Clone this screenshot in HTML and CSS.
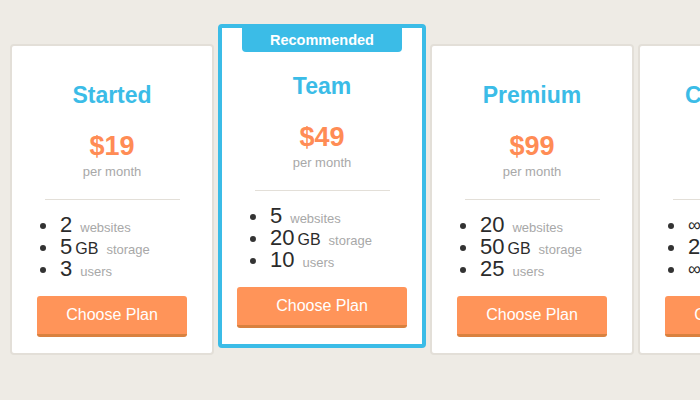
FILE: index.html
```html
<!DOCTYPE html>
<html lang="en">
<head>
<meta charset="utf-8">
<title>Pricing plans</title>
<link rel="stylesheet" href="styles.css">
</head>
<body>
<div class="plans">
  <div class="plan">
    <h2 class="plan-name">Started</h2>
    <div class="plan-price">$19</div>
    <div class="plan-period">per month</div>
    <hr class="plan-divider">
    <ul class="plan-features">
      <li><span class="qty">2</span><span class="label">websites</span></li>
      <li><span class="qty">5</span><span class="unit">GB</span><span class="label">storage</span></li>
      <li><span class="qty">3</span><span class="label">users</span></li>
    </ul>
    <a class="plan-button" href="#">Choose Plan</a>
  </div>
  <div class="plan plan-featured">
    <div class="plan-badge">Recommended</div>
    <h2 class="plan-name">Team</h2>
    <div class="plan-price">$49</div>
    <div class="plan-period">per month</div>
    <hr class="plan-divider">
    <ul class="plan-features">
      <li><span class="qty">5</span><span class="label">websites</span></li>
      <li><span class="qty">20</span><span class="unit">GB</span><span class="label">storage</span></li>
      <li><span class="qty">10</span><span class="label">users</span></li>
    </ul>
    <a class="plan-button" href="#">Choose Plan</a>
  </div>
  <div class="plan">
    <h2 class="plan-name">Premium</h2>
    <div class="plan-price">$99</div>
    <div class="plan-period">per month</div>
    <hr class="plan-divider">
    <ul class="plan-features">
      <li><span class="qty">20</span><span class="label">websites</span></li>
      <li><span class="qty">50</span><span class="unit">GB</span><span class="label">storage</span></li>
      <li><span class="qty">25</span><span class="label">users</span></li>
    </ul>
    <a class="plan-button" href="#">Choose Plan</a>
  </div>
  <div class="plan">
    <h2 class="plan-name">Corporate</h2>
    <div class="plan-price">$199</div>
    <div class="plan-period">per month</div>
    <hr class="plan-divider">
    <ul class="plan-features">
      <li><span class="qty qty-inf">∞</span><span class="label">websites</span></li>
      <li><span class="qty">200</span><span class="unit">GB</span><span class="label">storage</span></li>
      <li><span class="qty qty-inf">∞</span><span class="label">users</span></li>
    </ul>
    <a class="plan-button" href="#">Choose Plan</a>
  </div>
</div>
</body>
</html>
```

FILE: styles.css
```css
html, body {
  margin: 0;
  padding: 0;
}

body {
  background: #eeebe5;
  font-family: "Liberation Sans", Arial, sans-serif;
  width: 700px;
  height: 400px;
  overflow: hidden;
}

.plans {
  display: flex;
  align-items: flex-start;
  gap: 4px;
  padding: 24px 0 0 10px;
}

.plan {
  flex: 0 0 auto;
  width: 200px;
  margin-top: 20px;
  padding: 35px 0 16px;
  background: #ffffff;
  border: 2px solid #e3dfd8;
  border-radius: 4px;
  text-align: center;
}

.plan-featured {
  margin-top: 0;
  padding-top: 0;
  border: 4px solid #3bbce7;
  border-radius: 4px;
}

.plan-badge {
  width: 160px;
  height: 24px;
  margin: 0 auto 20px;
  background: #3bbce7;
  border-radius: 0 0 4px 4px;
  color: #ffffff;
  font-size: 14.5px;
  font-weight: bold;
  line-height: 24px;
}

.plan-name {
  margin: 0;
  color: #3bbce7;
  font-size: 23px;
  font-weight: bold;
  line-height: 28px;
}

.plan-price {
  margin-top: 22px;
  color: #ff8c55;
  font-size: 27px;
  font-weight: bold;
  line-height: 30px;
}

.plan-period {
  margin-top: 3px;
  color: #a8a8a8;
  font-size: 13px;
  line-height: 16px;
}

.plan-divider {
  width: 135px;
  height: 1px;
  margin: 19px auto 0;
  border: 0;
  background: #e3dfd8;
}

.plan-features {
  list-style: none;
  margin: 13.6px 0 0;
  padding: 0;
  text-align: left;
}

.plan-features li {
  display: flex;
  align-items: baseline;
  box-sizing: border-box;
  height: 22px;
  padding-top: 2px;
  white-space: nowrap;
}

.plan-features li::before {
  content: "";
  flex: 0 0 auto;
  align-self: flex-start;
  width: 6px;
  height: 6px;
  margin: 7px 14px 0 28px;
  border-radius: 50%;
  background: #333333;
}

.qty {
  color: #2b2b2b;
  font-size: 22px;
  line-height: 18px;
}

.qty-inf {
  font-size: 18px;
}

.unit {
  margin-left: 3px;
  color: #2b2b2b;
  font-size: 16px;
  line-height: 14px;
}

.label {
  margin-left: 8px;
  color: #a8a8a8;
  font-size: 13px;
  line-height: 13px;
}

.plan-button {
  display: block;
  width: 150px;
  height: 38px;
  margin: 16.4px auto 0;
  background: #ff9459;
  border-bottom: 3px solid #d9813f;
  border-radius: 3px;
  color: #ffffff;
  font-size: 16px;
  line-height: 38px;
  text-decoration: none;
}

.plan-featured .plan-button {
  width: 170px;
}
```
